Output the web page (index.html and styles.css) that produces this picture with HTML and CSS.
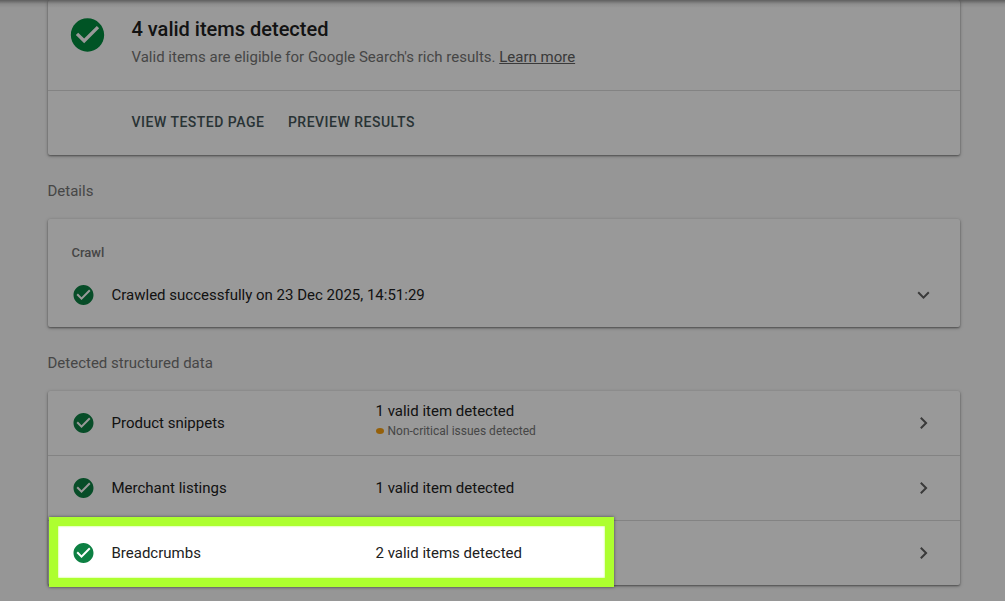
FILE: index.html
```html
<!DOCTYPE html>
<html lang="en">
	<head>
		<meta charset="UTF-8" />
		<meta name="viewport" content="width=device-width, initial-scale=1.0" />
		<title>Rich Results Test</title>
		<link rel="stylesheet" href="styles.css">
	</head>
	<body>
		<svg class="symbols" width="0" height="0">
			<symbol id="check" viewBox="0 0 24 24">
				<path d="M12 2C6.48 2 2 6.48 2 12s4.48 10 10 10 10-4.48 10-10S17.52 2 12 2zm-2 15l-5-5 1.41-1.41L10 14.17l7.59-7.59L19 8l-9 9z" />
			</symbol>
			<symbol id="chevron" viewBox="0 0 24 24">
				<path d="M10 6L8.59 7.41 13.17 12l-4.58 4.59L10 18l6-6z" />
			</symbol>
		</svg>

		<main class="page">
			<section class="card summary">
				<div class="summary-top">
					<svg class="check check-big"><use href="#check" /></svg>
					<div>
						<h1 class="title">4 valid items detected</h1>
						<p class="subtitle">Valid items are eligible for Google Search's rich results. <a class="link" href="#">Learn more</a></p>
					</div>
				</div>
				<div class="actions">
					<button class="btn" type="button">VIEW TESTED PAGE</button>
					<button class="btn" type="button">PREVIEW RESULTS</button>
				</div>
			</section>

			<h2 class="heading">Details</h2>
			<section class="card crawl">
				<h3 class="crawl-title">Crawl</h3>
				<div class="crawl-row">
					<svg class="check"><use href="#check" /></svg>
					<span class="label label-wide">Crawled successfully on 23 Dec 2025, 14:51:29</span>
					<svg class="chevron chevron-down"><use href="#chevron" /></svg>
				</div>
			</section>

			<h2 class="heading">Detected structured data</h2>
			<section class="card">
				<div class="row">
					<svg class="check"><use href="#check" /></svg>
					<span class="label">Product snippets</span>
					<div class="status status-double">
						<div class="status-text">1 valid item detected</div>
						<div class="issues"><span class="dot"></span>Non-critical issues detected</div>
					</div>
					<svg class="chevron"><use href="#chevron" /></svg>
				</div>
				<div class="row">
					<svg class="check"><use href="#check" /></svg>
					<span class="label">Merchant listings</span>
					<div class="status">1 valid item detected</div>
					<svg class="chevron"><use href="#chevron" /></svg>
				</div>
				<div class="row">
					<svg class="check"><use href="#check" /></svg>
					<span class="label">Breadcrumbs</span>
					<div class="status">2 valid items detected</div>
					<svg class="chevron"><use href="#chevron" /></svg>
					<div class="spotlight"></div>
				</div>
			</section>
		</main>
		<div class="top-shadow"></div>
	</body>
</html>
```

FILE: styles.css
```css
* {
	box-sizing: border-box;
}

body {
	margin: 0;
	height: 100vh;
	overflow: hidden;
	background: #fafafa;
	color: #212121;
	font-family: Roboto, sans-serif;
	font-size: 15px;
}

h1,
h2,
h3,
p {
	margin: 0;
}

.symbols {
	display: block;
	height: 0;
}

.page {
	width: 912px;
	margin-left: 47.5px;
}

.card {
	background: #fff;
	border-radius: 2px;
	box-shadow: 0 1px 2px rgba(0, 0, 0, 0.4), 0 1px 4px rgba(0, 0, 0, 0.2);
}

.summary {
	height: 155px;
}
.summary-top {
	display: flex;
	gap: 24px;
	height: 91px;
	padding: 15px 20px 0;
	border-bottom: 1px solid #dadada;
}
.title {
	font-size: 20px;
	font-weight: 500;
	line-height: 28px;
}
.subtitle {
	color: #757575;
	line-height: 28px;
}
.link {
	color: #616161;
}
.actions {
	display: flex;
	align-items: center;
	gap: 23.5px;
	height: 63px;
	padding-left: 84px;
	padding-bottom: 1px;
}
.btn {
	padding: 0;
	border: none;
	background: none;
	color: #455659;
	font-family: Roboto, sans-serif;
	font-size: 14px;
	font-weight: 500;
	letter-spacing: 0.5px;
}

.heading {
	height: 64px;
	padding-top: 6px;
	color: #757575;
	font-size: 15px;
	font-weight: 400;
	line-height: 60px;
}

.check {
	flex: none;
	width: 24px;
	height: 24px;
	fill: #0d8043;
	transform: translateX(-0.5px);
}
.check-big {
	width: 40px;
	height: 40px;
	fill: #008c3f;
}
.chevron {
	flex: none;
	width: 24px;
	height: 24px;
	margin-left: auto;
	fill: #616161;
	transform: translateX(-0.5px);
}
.chevron-down {
	transform: translateX(-0.5px) rotate(90deg);
}

.crawl {
	height: 108px;
	padding-top: 24px;
}
.crawl-title {
	padding-left: 24px;
	color: #757575;
	font-size: 13px;
	font-weight: 500;
	line-height: 20px;
}
.crawl-row {
	display: flex;
	align-items: center;
	height: 64px;
	padding: 0 24px;
}
.label {
	width: 264px;
	margin-left: 16px;
}
.label-wide {
	width: auto;
}

.row {
	display: flex;
	align-items: center;
	position: relative;
	height: 64px;
	padding: 0 24px;
}
.row + .row {
	height: 65px;
	border-top: 1px solid #dadada;
}
.status-double {
	padding-bottom: 4px;
}
.status-text {
	line-height: 20px;
}
.issues {
	display: flex;
	align-items: center;
	color: #757575;
	font-size: 12px;
	line-height: 20px;
}
.dot {
	width: 8px;
	height: 6px;
	margin-right: 4px;
	border-radius: 50%;
	background: #f9a010;
}

/* dims everything around the last row */
.spotlight {
	position: absolute;
	top: -4px;
	left: 1px;
	width: 565px;
	height: 70px;
	border: 9px solid #adff2f;
	box-shadow: 0 0 0 1200px rgba(0, 0, 0, 0.4), 0 0 3px rgba(0, 0, 0, 0.5), inset 0 0 2px #adff2f;
}

.top-shadow {
	position: absolute;
	top: 0;
	left: 0;
	width: 100%;
	height: 8px;
	background: linear-gradient(rgba(0, 0, 0, 0.38), rgba(0, 0, 0, 0.08) 50%, transparent);
}
```
